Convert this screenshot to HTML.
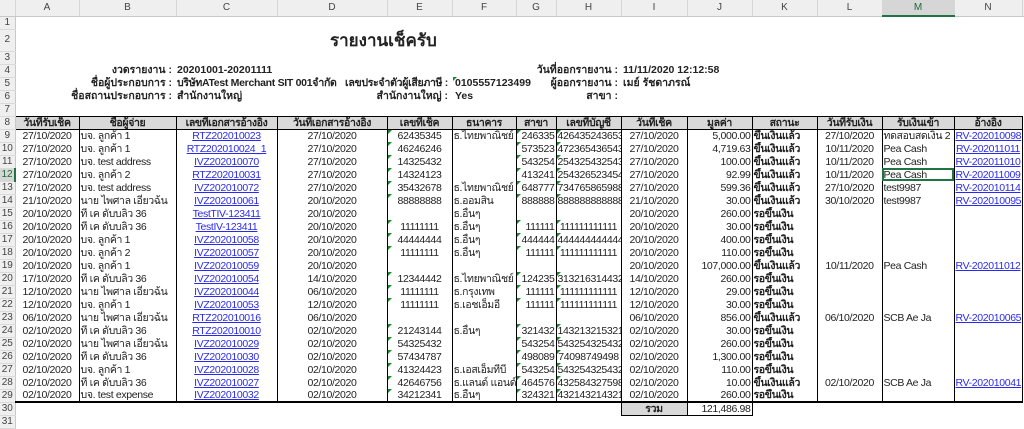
<!DOCTYPE html>
<html><head><meta charset="utf-8">
<style>
*{margin:0;padding:0;box-sizing:border-box}
body{width:1024px;height:424px;overflow:hidden;background:#fff;font-family:"Liberation Sans",Tahoma,"DejaVu Sans",sans-serif;font-size:11px;color:#222;position:relative}
table{border-collapse:collapse;table-layout:fixed;position:absolute;left:0;top:0;width:1024px}
td{height:13px;line-height:12px;white-space:nowrap;overflow:hidden;padding:0 1px;font-size:10.5px;letter-spacing:-0.35px}
.ch td{height:16px;background:#efefef;color:#444;text-align:center;border-right:1px solid #d6d6d6;border-bottom:1px solid #c8c8c8;font-size:10px;letter-spacing:0}
td.rn{background:#efefef;color:#444;text-align:center;font-size:10px;border-right:1px solid #c8c8c8;border-bottom:1px solid #dadada;padding:0;letter-spacing:0}
td.sel{background:#d6d6d6;color:#1e6b3a;border-bottom:2px solid #217346}
td.rsel{background:#d6d6d6;color:#1e6b3a;border-right:2px solid #217346}
.h td:not(.rn){background:#d9d9d9;border:1px solid #000;font-weight:bold;text-align:center}
.d td:not(.rn){border-left:1px solid #000;border-right:1px solid #000}
.d td:nth-child(2),.d td:nth-child(4),.d td:nth-child(5),.d td:nth-child(6),.d td:nth-child(9),.d td:nth-child(10),.d td:nth-child(13),.d td:nth-child(15){text-align:center}
.d td:nth-child(8),.d td:nth-child(11){text-align:right}
.d td:nth-child(4) span,.d td:nth-child(15) span{color:#2a2aee;text-decoration:underline}
.d td:nth-child(12){font-weight:bold}
.last td:not(.rn){border-bottom:2px solid #000}
.g{position:relative}
.g::before{content:"";position:absolute;left:0;top:0;border-top:4px solid #1a8a2a;border-right:4px solid transparent}
.t{position:absolute;white-space:nowrap;font-size:10.5px;font-weight:bold;line-height:13px}
.r{text-align:right}
</style></head><body>
<table>
<colgroup><col style="width:15px"><col style="width:64px"><col style="width:97px"><col style="width:101px"><col style="width:110px"><col style="width:65px"><col style="width:64px"><col style="width:40px"><col style="width:65px"><col style="width:66px"><col style="width:65px"><col style="width:65px"><col style="width:65px"><col style="width:72px"><col style="width:68px"><col style="width:2px"></colgroup>
<tr class="ch"><td></td><td>A</td><td>B</td><td>C</td><td>D</td><td>E</td><td>F</td><td>G</td><td>H</td><td>I</td><td>J</td><td>K</td><td>L</td><td class="sel">M</td><td>N</td><td></td></tr>
<tr><td class="rn">1</td><td colspan="15"></td></tr>
<tr><td class="rn" style="height:22px">2</td><td colspan="15"></td></tr>
<tr><td class="rn">3</td><td colspan="15"></td></tr>
<tr><td class="rn">4</td><td colspan="15"></td></tr>
<tr><td class="rn">5</td><td colspan="15"></td></tr>
<tr><td class="rn">6</td><td colspan="15"></td></tr>
<tr><td class="rn" style="height:12px">7</td><td colspan="15"></td></tr>
<tr class="h"><td class="rn">8</td><td>วันที่รับเช็ค</td><td>ชื่อผู้จ่าย</td><td>เลขที่เอกสารอ้างอิง</td><td>วันที่เอกสารอ้างอิง</td><td>เลขที่เช็ค</td><td>ธนาคาร</td><td>สาขา</td><td>เลขที่บัญชี</td><td>วันที่เช็ค</td><td>มูลค่า</td><td>สถานะ</td><td>วันที่รับเงิน</td><td>รับเงินเข้า</td><td>อ้างอิง</td><td style="border:0;background:#fff"></td></tr>
<tr class="d"><td class="rn">9</td><td>27/10/2020</td><td>บจ. ลูกค้า 1</td><td><span>RTZ202010023</span></td><td>27/10/2020</td><td class="g">62435345</td><td>ธ.ไทยพาณิชย์</td><td class="g">246335</td><td class="g">426435243653</td><td>27/10/2020</td><td>5,000.00</td><td>ขึ้นเงินแล้ว</td><td>27/10/2020</td><td>ทดสอบสดเงิน 2</td><td><span>RV-202010098</span></td><td></td></tr>
<tr class="d"><td class="rn">10</td><td>27/10/2020</td><td>บจ. ลูกค้า 1</td><td><span>RTZ202010024_1</span></td><td>27/10/2020</td><td class="g">46246246</td><td></td><td class="g">573523</td><td class="g">472365436543</td><td>27/10/2020</td><td>4,719.63</td><td>ขึ้นเงินแล้ว</td><td>10/11/2020</td><td>Pea Cash</td><td><span>RV-202011011</span></td><td></td></tr>
<tr class="d"><td class="rn">11</td><td>27/10/2020</td><td>บจ. test address</td><td><span>IVZ202010070</span></td><td>27/10/2020</td><td class="g">14325432</td><td></td><td class="g">543254</td><td class="g">254325432543</td><td>27/10/2020</td><td>100.00</td><td>ขึ้นเงินแล้ว</td><td>10/11/2020</td><td>Pea Cash</td><td><span>RV-202011010</span></td><td></td></tr>
<tr class="d"><td class="rn rsel">12</td><td>27/10/2020</td><td>บจ. ลูกค้า 2</td><td><span>RTZ202010031</span></td><td>27/10/2020</td><td class="g">14324123</td><td></td><td class="g">413241</td><td class="g">254326523454</td><td>27/10/2020</td><td>92.99</td><td>ขึ้นเงินแล้ว</td><td>10/11/2020</td><td style="outline:2px solid #217346;outline-offset:-2px">Pea Cash</td><td><span>RV-202011009</span></td><td></td></tr>
<tr class="d"><td class="rn">13</td><td>27/10/2020</td><td>บจ. test address</td><td><span>IVZ202010072</span></td><td>27/10/2020</td><td class="g">35432678</td><td>ธ.ไทยพาณิชย์</td><td class="g">648777</td><td class="g">734765865988</td><td>27/10/2020</td><td>599.36</td><td>ขึ้นเงินแล้ว</td><td>27/10/2020</td><td>test9987</td><td><span>RV-202010114</span></td><td></td></tr>
<tr class="d"><td class="rn">14</td><td>21/10/2020</td><td>นาย ไพศาล เอี่ยวฉ้น</td><td><span>IVZ202010061</span></td><td>20/10/2020</td><td class="g">88888888</td><td>ธ.ออมสิน</td><td class="g">888888</td><td class="g">888888888888</td><td>21/10/2020</td><td>30.00</td><td>ขึ้นเงินแล้ว</td><td>30/10/2020</td><td>test9987</td><td><span>RV-202010095</span></td><td></td></tr>
<tr class="d"><td class="rn">15</td><td>20/10/2020</td><td>ที เค ดับบลิว 36</td><td><span>TestTIV-123411</span></td><td>20/10/2020</td><td></td><td>ธ.อื่นๆ</td><td></td><td></td><td>20/10/2020</td><td>260.00</td><td>รอขึ้นเงิน</td><td></td><td></td><td></td><td></td></tr>
<tr class="d"><td class="rn">16</td><td>20/10/2020</td><td>ที เค ดับบลิว 36</td><td><span>TestIV-123411</span></td><td>20/10/2020</td><td class="g">11111111</td><td>ธ.อื่นๆ</td><td class="g">111111</td><td class="g">111111111111</td><td>20/10/2020</td><td>30.00</td><td>รอขึ้นเงิน</td><td></td><td></td><td></td><td></td></tr>
<tr class="d"><td class="rn">17</td><td>20/10/2020</td><td>บจ. ลูกค้า 1</td><td><span>IVZ202010058</span></td><td>20/10/2020</td><td class="g">44444444</td><td>ธ.อื่นๆ</td><td class="g">444444</td><td class="g">444444444444</td><td>20/10/2020</td><td>400.00</td><td>รอขึ้นเงิน</td><td></td><td></td><td></td><td></td></tr>
<tr class="d"><td class="rn">18</td><td>20/10/2020</td><td>บจ. ลูกค้า 2</td><td><span>IVZ202010057</span></td><td>20/10/2020</td><td class="g">11111111</td><td>ธ.อื่นๆ</td><td class="g">111111</td><td class="g">111111111111</td><td>20/10/2020</td><td>110.00</td><td>รอขึ้นเงิน</td><td></td><td></td><td></td><td></td></tr>
<tr class="d"><td class="rn">19</td><td>20/10/2020</td><td>บจ. ลูกค้า 1</td><td><span>IVZ202010059</span></td><td>20/10/2020</td><td></td><td></td><td></td><td></td><td>20/10/2020</td><td>107,000.00</td><td>ขึ้นเงินแล้ว</td><td>10/11/2020</td><td>Pea Cash</td><td><span>RV-202011012</span></td><td></td></tr>
<tr class="d"><td class="rn">20</td><td>17/10/2020</td><td>ที เค ดับบลิว 36</td><td><span>IVZ202010054</span></td><td>14/10/2020</td><td class="g">12344442</td><td>ธ.ไทยพาณิชย์</td><td class="g">124235</td><td class="g">313216314432</td><td>14/10/2020</td><td>260.00</td><td>รอขึ้นเงิน</td><td></td><td></td><td></td><td></td></tr>
<tr class="d"><td class="rn">21</td><td>12/10/2020</td><td>นาย ไพศาล เอี่ยวฉ้น</td><td><span>IVZ202010044</span></td><td>06/10/2020</td><td class="g">11111111</td><td>ธ.กรุงเทพ</td><td class="g">111111</td><td class="g">111111111111</td><td>12/10/2020</td><td>29.00</td><td>รอขึ้นเงิน</td><td></td><td></td><td></td><td></td></tr>
<tr class="d"><td class="rn">22</td><td>12/10/2020</td><td>บจ. ลูกค้า 1</td><td><span>IVZ202010053</span></td><td>12/10/2020</td><td class="g">11111111</td><td>ธ.เอชเอ็มอี</td><td class="g">111111</td><td class="g">111111111111</td><td>12/10/2020</td><td>30.00</td><td>รอขึ้นเงิน</td><td></td><td></td><td></td><td></td></tr>
<tr class="d"><td class="rn">23</td><td>06/10/2020</td><td>นาย ไพศาล เอี่ยวฉ้น</td><td><span>RTZ202010016</span></td><td>06/10/2020</td><td></td><td></td><td></td><td></td><td>06/10/2020</td><td>856.00</td><td>ขึ้นเงินแล้ว</td><td>06/10/2020</td><td>SCB Ae Ja</td><td><span>RV-202010065</span></td><td></td></tr>
<tr class="d"><td class="rn">24</td><td>02/10/2020</td><td>ที เค ดับบลิว 36</td><td><span>RTZ202010010</span></td><td>02/10/2020</td><td class="g">21243144</td><td>ธ.อื่นๆ</td><td class="g">321432</td><td class="g">143213215321</td><td>02/10/2020</td><td>30.00</td><td>รอขึ้นเงิน</td><td></td><td></td><td></td><td></td></tr>
<tr class="d"><td class="rn">25</td><td>02/10/2020</td><td>นาย ไพศาล เอี่ยวฉ้น</td><td><span>IVZ202010029</span></td><td>02/10/2020</td><td class="g">54325432</td><td></td><td class="g">543254</td><td class="g">543254325432</td><td>02/10/2020</td><td>260.00</td><td>รอขึ้นเงิน</td><td></td><td></td><td></td><td></td></tr>
<tr class="d"><td class="rn">26</td><td>02/10/2020</td><td>ที เค ดับบลิว 36</td><td><span>IVZ202010030</span></td><td>02/10/2020</td><td class="g">57434787</td><td></td><td class="g">498089</td><td class="g">74098749498</td><td>02/10/2020</td><td>1,300.00</td><td>รอขึ้นเงิน</td><td></td><td></td><td></td><td></td></tr>
<tr class="d"><td class="rn">27</td><td>02/10/2020</td><td>บจ. ลูกค้า 1</td><td><span>IVZ202010028</span></td><td>02/10/2020</td><td class="g">41324423</td><td>ธ.เอสเอ็มทีบี</td><td class="g">543254</td><td class="g">543254325432</td><td>02/10/2020</td><td>110.00</td><td>รอขึ้นเงิน</td><td></td><td></td><td></td><td></td></tr>
<tr class="d"><td class="rn">28</td><td>02/10/2020</td><td>ที เค ดับบลิว 36</td><td><span>IVZ202010027</span></td><td>02/10/2020</td><td class="g">42646756</td><td>ธ.แลนด์ แอนด์</td><td class="g">464576</td><td class="g">432584327598</td><td>02/10/2020</td><td>10.00</td><td>ขึ้นเงินแล้ว</td><td>02/10/2020</td><td>SCB Ae Ja</td><td><span>RV-202010041</span></td><td></td></tr>
<tr class="d last"><td class="rn">29</td><td>02/10/2020</td><td>บจ. test expense</td><td><span>IVZ202010032</span></td><td>02/10/2020</td><td class="g">34212341</td><td>ธ.อื่นๆ</td><td class="g">324321</td><td class="g">432143214321</td><td>02/10/2020</td><td>260.00</td><td>รอขึ้นเงิน</td><td></td><td></td><td></td><td style="border:0"></td></tr>
<tr><td class="rn">30</td><td colspan="8"></td><td style="background:#d9d9d9;border:1px solid #000;text-align:center;font-weight:bold">รวม</td><td style="border:1px solid #000;text-align:right">121,486.98</td><td colspan="5"></td></tr>
<tr><td class="rn" style="height:12px">31</td><td colspan="15"></td></tr>
</table>

<div class="t" style="left:330px;top:31px;font-size:17px;line-height:20px">รายงานเช็ครับ</div>
<div class="t r" style="right:852px;top:64px">งวดรายงาน :</div>
<div class="t" style="left:177px;top:64px">20201001-20201111</div>
<div class="t r" style="right:852px;top:77px">ชื่อผู้ประกอบการ :</div>
<div class="t" style="left:177px;top:77px;letter-spacing:-0.3px">บริษัทATest Merchant SIT 001จำกัด</div>
<div class="t r" style="right:852px;top:90px">ชื่อสถานประกอบการ :</div>
<div class="t" style="left:177px;top:90px">สำนักงานใหญ่</div>
<div class="t r" style="right:576px;top:77px;letter-spacing:-0.3px">เลขประจำตัวผู้เสียภาษี :</div>
<div class="t g" style="left:453px;top:77px;padding-left:2px">0105557123499</div>
<div class="t r" style="right:576px;top:90px">สำนักงานใหญ่ :</div>
<div class="t" style="left:455px;top:90px">Yes</div>
<div class="t r" style="right:406px;top:64px">วันที่ออกรายงาน :</div>
<div class="t" style="left:623px;top:64px">11/11/2020 12:12:58</div>
<div class="t r" style="right:406px;top:77px">ผู้ออกรายงาน :</div>
<div class="t" style="left:623px;top:77px">เมย์ รัชดาภรณ์</div>
<div class="t r" style="right:406px;top:90px">สาขา :</div>
</body></html>
